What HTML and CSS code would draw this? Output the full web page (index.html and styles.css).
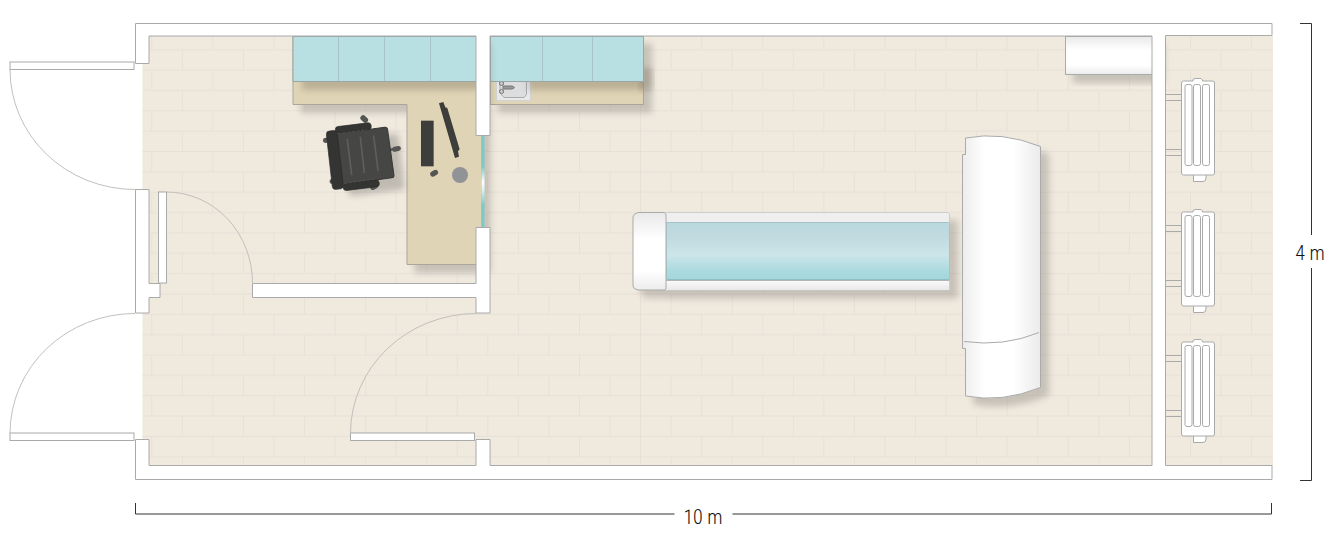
FILE: index.html
```html
<!DOCTYPE html>
<html lang="en">
<head>
<meta charset="utf-8">
<meta name="viewport" content="width=device-width, initial-scale=1">
<title>Floor plan</title>
<link rel="stylesheet" href="styles.css">
</head>
<body>
<main class="plan">
<svg class="plan-drawing" viewBox="0 0 1333 533" role="img" aria-label="Floor plan, 10 m by 4 m">
  <defs>
    <pattern id="bricks" x="151.3" y="28.9" width="61.1" height="40.7" patternUnits="userSpaceOnUse">
      <path class="joint" d="M0 .5H62M0 20.85H62M.5 0V20.5M31 20.5V41"/>
    </pattern>
    <filter id="shadow" x="-20%" y="-20%" width="150%" height="150%" color-interpolation-filters="sRGB">
      <feDropShadow dx="8" dy="8" stdDeviation="3" flood-color="#4a4644" flood-opacity=".24"/>
    </filter>
    <filter id="soft" x="-20%" y="-50%" width="140%" height="200%"><feGaussianBlur stdDeviation="3"/></filter>
    <filter id="chair-blur" x="-20%" y="-20%" width="150%" height="150%"><feGaussianBlur stdDeviation="9"/></filter>
    <linearGradient id="glass" x2="0" y2="1">
      <stop offset="0" stop-color="#7acac6"/><stop offset=".33" stop-color="#7acac6"/><stop offset=".5" stop-color="#fff"/>
      <stop offset=".58" stop-color="#dff2f2"/><stop offset=".75" stop-color="#7acac6"/><stop offset="1" stop-color="#7acac6"/>
    </linearGradient>
    <linearGradient id="white-v" x2="0" y2="1">
      <stop offset="0" stop-color="#e9e9e9"/><stop offset=".35" stop-color="#fff"/><stop offset=".75" stop-color="#fff"/><stop offset="1" stop-color="#ececec"/>
    </linearGradient>
    <linearGradient id="white-h">
      <stop offset="0" stop-color="#ececec"/><stop offset=".28" stop-color="#fff"/><stop offset=".65" stop-color="#fff"/><stop offset="1" stop-color="#ebebeb"/>
    </linearGradient>
    <linearGradient id="rail" x2="0" y2="1">
      <stop offset="0" stop-color="#fafafa"/><stop offset="1" stop-color="#e9e9e9"/>
    </linearGradient>
    <linearGradient id="mattress" x2="0" y2="1">
      <stop offset="0" stop-color="#b9d8de"/><stop offset=".25" stop-color="#c1dae0"/><stop offset=".56" stop-color="#cbe5e9"/>
      <stop offset=".85" stop-color="#a9dade"/><stop offset="1" stop-color="#a3d6da"/>
    </linearGradient>
    <clipPath id="desk-left"><path d="M293 82H482V264H407V104H293Z"/></clipPath>
    <clipPath id="desk-right"><path d="M490 82H643V104H490Z"/></clipPath>
    <g id="radiator" class="outline">
      <path class="pipe" d="M1166 94.5H1181M1166 100.5H1181M1166 149.5H1181M1166 155.5H1181"/>
      <path d="M1193.500 175V181.500H1203Q1206 181.500 1206 178V175"/>
      <path d="M1183.500 81H1193V79.500L1195 78.500H1201L1202.500 80V81H1212.500Q1214.500 81 1214.500 83V173Q1214.500 175 1212.500 175H1183.500Q1181.500 175 1181.500 173V83Q1181.500 81 1183.500 81Z"/>
      <rect x="1185" y="84.5" width="7" height="81" rx="2"/>
      <rect x="1193.500" y="84.5" width="7" height="81" rx="2"/>
      <rect x="1202.500" y="84.5" width="7" height="81" rx="2"/>
    </g>
  </defs>

  <rect class="floor" x="142.500" y="36" width="1130.500" height="430"/>
  <rect x="142.500" y="36" width="1130.500" height="430" fill="url(#bricks)"/>
  <path class="joint" d="M640.500 36V466"/>

  <!-- Kitchenette -->
  <rect class="desk" x="490.500" y="36" width="153" height="68.500" filter="url(#shadow)"/>
  <g class="sink">
    <rect x="496.500" y="79.500" width="34" height="21" fill="#e8e8e8" stroke="#d2d2d2"/>
    <path d="M500 80H526.500V94.500L524 97.500H504L500 93Z" fill="#dcdddf" stroke="#aaa"/>
    <path d="M503 86H512Q517 87.500 512 89H503Z" fill="#999" stroke="#777"/>
    <path d="M499 83.500H504M499 91.500H504" stroke="#888" stroke-width="2"/>
    <circle cx="501.500" cy="83.500" r="2" fill="#ccc" stroke="#777"/>
    <circle cx="501.500" cy="91.500" r="2" fill="#ccc" stroke="#777"/>
  </g>
  <g clip-path="url(#desk-right)"><rect class="cast" x="528" y="60" width="135" height="30" filter="url(#soft)"/></g>
  <rect class="cast" x="640" y="68" width="12" height="22" filter="url(#soft)"/>
  <rect class="cabinet" x="490.500" y="36.500" width="153" height="45"/>
  <path class="divider" d="M542.500 37V81M592.500 37V81"/>

  <!-- Reception desk -->
  <path class="desk" d="M293 36H482V264.500H407V104.500H293Z" filter="url(#shadow)"/>
  <g clip-path="url(#desk-left)"><rect class="cast" x="302" y="60" width="190" height="30" filter="url(#soft)"/></g>
  <rect class="cabinet" x="293" y="36.500" width="184" height="45"/>
  <path class="divider" d="M338.500 37V81M384.500 37V81M430.500 37V81"/>
  <rect x="481.500" y="136" width="3" height="92" fill="url(#glass)"/>

  <!-- Desk equipment and chair -->
  <g transform="translate(310 95) scale(.3333)">
    <rect class="dark" x="333" y="77" width="38" height="137"/>
    <path class="dark" d="M387 25L400 21L406 37L412 39L449 163L444 169L447 185L435 189Z"/>
    <rect class="caster" x="360" y="227" width="25" height="16" rx="8" transform="rotate(-32 372 235)"/>
    <circle class="cup" cx="450" cy="240" r="24"/>
    <rect class="chair-shade" x="105" y="125" width="170" height="170" rx="12" transform="rotate(-7 187 205)" filter="url(#chair-blur)"/>
    <g class="caster">
      <rect x="150" y="63" width="25" height="17" rx="8" transform="rotate(42 162 72)"/>
      <rect x="247" y="154" width="26" height="15" rx="7" transform="rotate(-12 260 162)"/>
      <path d="M235 162L252 158V166L238 169Z"/>
      <rect x="180" y="266" width="25" height="17" rx="8" transform="rotate(-28 192 275)"/>
      <circle cx="47" cy="136" r="8"/><circle cx="67" cy="259" r="8"/>
    </g>
    <rect class="chair-seat" x="87" y="106" width="156" height="153" rx="8" transform="rotate(-8 165 182)"/>
    <rect class="chair-part" x="58" y="107" width="33" height="176" rx="10" transform="rotate(-6.500 74 195)"/>
    <rect class="chair-part" x="76" y="89" width="108" height="20" rx="9" transform="rotate(-7 130 99)"/>
    <rect class="chair-part" x="99" y="260" width="109" height="21" rx="9" transform="rotate(-7 153 270)"/>
    <path class="stitch" d="M84 117L170 104M102 266L195 252"/>
    <path class="groove" d="M112 134L125 238M151 128L163 232M191 123L204 226"/>
  </g>

  <!-- Bed -->
  <g filter="url(#shadow)">
    <rect x="660" y="212.500" width="289.500" height="77.500" rx="2" fill="#efefef" stroke="#ccc"/>
    <path d="M638 212.500H666V290H638L633 286V217Z" fill="#fff"/>
  </g>
  <rect x="661" y="281" width="288" height="9" fill="url(#rail)"/>
  <rect x="666" y="222.500" width="283.500" height="58" rx="1" fill="url(#mattress)" stroke="#a6c4c8"/>
  <path d="M667 279.500H949" stroke="#8fbfc4"/>
  <path d="M667 280.500H949" stroke="#b0b5b5"/>
  <path d="M638 212.500H664Q666 212.500 666 215V288Q666 290 664 290H638Q633 289 633 286V217Q633 214 638 212.500Z" fill="url(#white-v)" stroke="#aaa"/>

  <!-- Tower unit -->
  <path filter="url(#shadow)" d="M965.500 138Q1002 131 1040.500 146.500V387.500Q1002 403 965.500 396V348.500H962.500V154.500H965.500Z" fill="url(#white-h)" stroke="#aaa"/>
  <path class="line" d="M964 341.500Q1004 347 1039 332.500"/>

  <!-- Sideboard -->
  <rect x="1065.500" y="36.500" width="90" height="38" fill="url(#white-v)" stroke="#aaa" filter="url(#shadow)"/>

  <!-- Walls -->
  <g class="outline">
    <path d="M135.500 23.500H1272V35.500H1165.500V465.500H1272V479.500H135.500V439.500H149V465.500H476V439.500H490V465.500H1152V36H490V135.500H476V36H149V63.500H135.500Z"/>
    <path d="M135.500 189.500H149V283.500H160V297.500H149V313H135.500Z"/>
    <path d="M252.500 283.500H476V227.500H490V313H476V297.500H252.500Z"/>
  </g>

  <!-- Doors -->
  <g class="outline">
    <rect x="10" y="62" width="124" height="7.500"/>
    <rect x="10" y="433" width="124" height="7.500"/>
    <rect x="158.500" y="192" width="8" height="91"/>
    <rect x="350.500" y="433" width="124" height="7.500"/>
  </g>
  <path class="swing" d="M10 69A125 120 0 0 0 135 189.500M10 433A125 120 0 0 1 135 313.500M167 192A86 91 0 0 1 252.500 283M350.500 433A126 120 0 0 1 476 313.500"/>

  <!-- Radiators -->
  <use href="#radiator"/>
  <use href="#radiator" y="131"/>
  <use href="#radiator" y="261"/>

  <!-- Dimensions -->
  <path class="measure" d="M135.500 503V514H674.500M732.500 514H1271.500V503M1300 23.500H1311.500V235M1311.500 268V480.500H1300"/>
  <text class="measure-label" x="703" y="524">10 m</text>
  <text class="measure-label" x="1310" y="260">4 m</text>
</svg>
</main>
</body>
</html>
```

FILE: styles.css
```css
body {
  margin: 0;
  background: #fff;
}

.plan-drawing {
  display: block;
  width: 100%;
  height: auto;
}

.floor { fill: #efe9de; }
.joint { fill: none; stroke: #e7e0d7; }

.outline { fill: #fff; stroke: #aaa; }
.line,
.pipe { fill: none; stroke: #aaa; }
.swing { fill: none; stroke: #c2c0bc; }

.desk { fill: #dfd4b5; stroke: #aaa69a; }
.cabinet { fill: #b8dfe2; stroke: #9aa6a6; }
.divider { fill: none; stroke: #a9c4c8; }
.cast { fill: #6b5f50; opacity: 0.3; }

.dark { fill: #3d3d3b; }
.cup { fill: #929397; }
.caster { fill: #555554; }
.chair-shade { fill: #4a4644; opacity: 0.28; }
.chair-seat { fill: #464645; stroke: #393938; stroke-width: 3; }
.chair-part { fill: #343433; stroke: #2b2b2a; stroke-width: 2; }
.stitch { fill: none; stroke: #5c5c5b; stroke-width: 2; stroke-dasharray: 10 4; }
.groove { fill: none; stroke: #5e5e5d; stroke-width: 5; stroke-linecap: round; }

.measure { fill: none; stroke: #333; }
.measure-label {
  fill: #111;
  font: 300 20px "Roboto Condensed", Roboto, "Liberation Sans", sans-serif;
  text-anchor: middle;
}
```
